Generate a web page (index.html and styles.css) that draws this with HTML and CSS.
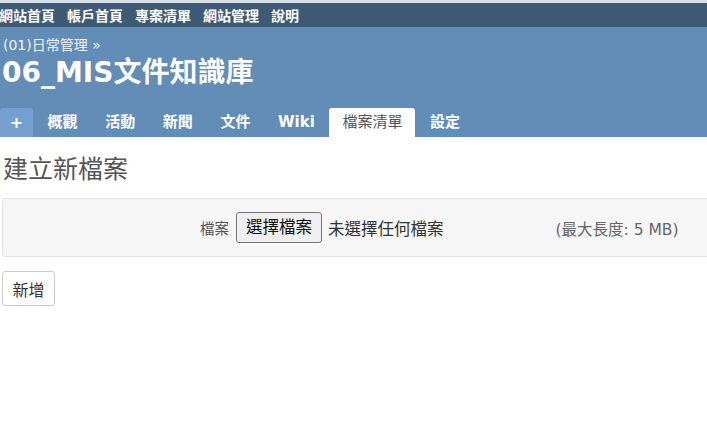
FILE: index.html
```html
<!DOCTYPE html>
<html lang="zh-Hant">
<head>
  <meta charset="UTF-8">
  <title>06_MIS文件知識庫 - 建立新檔案</title>
  <link rel="stylesheet" href="styles.css">
</head>
<body>
  <!-- Top menu -->
  <div class="top-menu">
    <a href="#">網站首頁</a>
    <a href="#">帳戶首頁</a>
    <a href="#">專案清單</a>
    <a href="#">網站管理</a>
    <a href="#">說明</a>
  </div>

  <!-- Project header -->
  <div class="header">
    <div class="breadcrumb">(01)日常管理 &raquo;</div>
    <h1>06_MIS文件知識庫</h1>
    <ul class="tabs">
      <li><a href="#" class="new-object">+</a></li>
      <li><a href="#">概觀</a></li>
      <li><a href="#">活動</a></li>
      <li><a href="#">新聞</a></li>
      <li><a href="#">文件</a></li>
      <li><a href="#">Wiki</a></li>
      <li><a href="#" class="selected">檔案清單</a></li>
      <li><a href="#">設定</a></li>
    </ul>
  </div>

  <!-- Content -->
  <div class="content">
    <h2>建立新檔案</h2>
    <form>
      <div class="box">
        <label class="field-label">檔案</label>
        <span class="file-button">選擇檔案</span>
        <span class="file-name">未選擇任何檔案</span>
        <span class="max-size">(最大長度: 5 MB)</span>
      </div>
      <button type="button" class="btn">新增</button>
    </form>
  </div>
</body>
</html>
```

FILE: styles.css
```css
* {
  margin: 0;
  padding: 0;
  box-sizing: border-box;
}

body {
  font-family: "DejaVu Sans", "Noto Sans CJK TC", sans-serif;
  font-size: 14px;
  color: #333;
  background: white;
  overflow: hidden;
}

a {
  text-decoration: none;
}

/* Top menu */
.top-menu {
  background: #3e5b76;
  border-top: 3px solid #d9dfe6;
  height: 27px;
  display: flex;
  align-items: center;
  gap: 12px;
  margin-left: -1px;
}

.top-menu a {
  color: white;
  font-weight: bold;
  font-size: 14px;
  font-family: "Noto Sans CJK TC", sans-serif;
}

/* Header */
.header {
  background: #628db6;
  color: white;
  height: 110px;
  padding-top: 8px;
  display: flex;
  flex-direction: column;
}

.breadcrumb {
  font-size: 14px;
  color: #eef3f8;
  padding-left: 3px;
  height: 20px;
  line-height: 20px;
}

.header h1 {
  font-size: 28px;
  font-weight: bold;
  padding-left: 2px;
  line-height: 36px;
}

.tabs {
  list-style: none;
  display: flex;
  gap: 1.6px;
  margin-top: auto;
  height: 29px;
}

.tabs a {
  display: block;
  height: 29px;
  line-height: 29px;
  padding: 0 13px;
  color: white;
  font-weight: bold;
  font-size: 15px;
  border-radius: 3px 3px 0 0;
}

.tabs a.new-object {
  background: #759fcf;
  width: 33px;
  padding: 0;
  text-align: center;
  font-size: 16px;
}

.tabs a.selected {
  background: white;
  color: #555;
  font-weight: normal;
}

/* Content */
.content {
  padding: 18px 2px 0 2px;
}

.content h2 {
  font-size: 25px;
  font-weight: normal;
  color: #555;
  padding-left: 1px;
  line-height: 30px;
  margin-bottom: 13px;
}

.box {
  background: #f6f6f6;
  border: 1px solid #e4e4e4;
  border-radius: 3px;
  height: 59px;
  margin-right: -10px;
  display: flex;
  align-items: center;
  padding-left: 197px;
}

.field-label {
  font-size: 14.5px;
  color: #555;
  margin-right: 7px;
}

.file-button {
  border: 1px solid #767676;
  border-radius: 3px;
  background: #efefef;
  font-size: 16.5px;
  color: #111;
  height: 31px;
  line-height: 29px;
  padding: 0 9px;
}

.file-name {
  font-size: 16.5px;
  color: #333;
  margin-left: 6px;
}

.max-size {
  font-size: 15.5px;
  color: #666;
  margin-left: 112px;
}

.btn {
  margin-top: 14px;
  background: white;
  border: 1px solid #ccc;
  border-radius: 3px;
  font-family: "Noto Sans CJK TC", sans-serif;
  font-size: 16px;
  color: #333;
  height: 35px;
  width: 53px;
}
```
